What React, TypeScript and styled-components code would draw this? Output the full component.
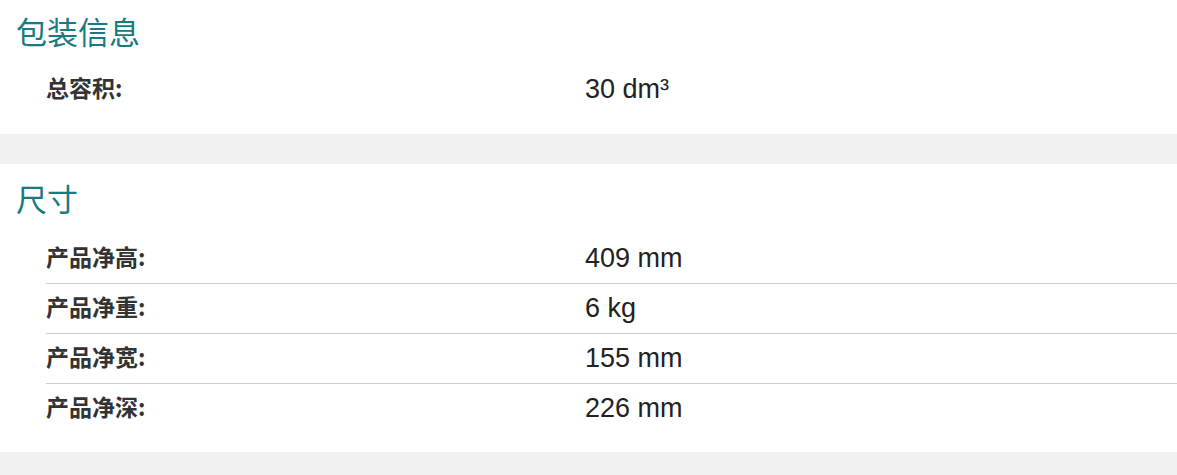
import React from "react";
import styled, { createGlobalStyle } from "styled-components";

const GlobalStyle = createGlobalStyle`
  html, body {
    margin: 0;
    padding: 0;
    background: #f1f1f1;
  }
  body {
    font-family: "Liberation Sans", Arial, "Noto Sans CJK SC", sans-serif;
  }
`;

const Page = styled.div`
  display: flex;
  flex-direction: column;
  gap: 30px;
  padding-bottom: 23px;
`;

const Panel = styled.section<{ $top: number; $bottom: number }>`
  background: #fff;
  padding: ${(p) => p.$top}px 0 ${(p) => p.$bottom}px 16px;
`;

const Heading = styled.h2`
  margin: 0;
  font-family: "Noto Sans CJK SC", sans-serif;
  font-weight: 400;
  font-size: 31px;
  line-height: 40px;
  color: #1a7a82;
`;

const List = styled.div`
  margin-left: 30px;
  display: flex;
  flex-direction: column;
`;

const Row = styled.div`
  display: grid;
  grid-template-columns: 539px 1fr;
  align-items: center;
  height: 49px;
  border-bottom: 1px solid #cfcfcf;

  &:last-child {
    border-bottom: none;
  }
`;

const Label = styled.div`
  font-family: "Noto Sans CJK SC", sans-serif;
  font-weight: 700;
  font-size: 23px;
  line-height: 30px;
  padding-bottom: 6px;
  color: #333;
`;

const Value = styled.div`
  font-family: "Liberation Sans", Arial, sans-serif;
  font-size: 27px;
  line-height: 30px;
  padding-bottom: 2px;
  color: #222;
`;

const Spacer = styled.div<{ $h: number }>`
  height: ${(p) => p.$h}px;
`;

type Item = { label: string; value: string };

const sections: { title: string; top: number; gap: number; bottom: number; items: Item[] }[] = [
  {
    title: "包装信息",
    top: 11,
    gap: 14,
    bottom: 20,
    items: [{ label: "总容积:", value: "30 dm³" }],
  },
  {
    title: "尺寸",
    top: 14,
    gap: 16,
    bottom: 19,
    items: [
      { label: "产品净高:", value: "409 mm" },
      { label: "产品净重:", value: "6 kg" },
      { label: "产品净宽:", value: "155 mm" },
      { label: "产品净深:", value: "226 mm" },
    ],
  },
];

export default function App() {
  return (
    <>
      <GlobalStyle />
      <Page>
        {sections.map((s) => (
          <Panel key={s.title} $top={s.top} $bottom={s.bottom}>
            <Heading>{s.title}</Heading>
            <Spacer $h={s.gap} />
            <List>
              {s.items.map((it) => (
                <Row key={it.label}>
                  <Label>{it.label}</Label>
                  <Value>{it.value}</Value>
                </Row>
              ))}
            </List>
          </Panel>
        ))}
      </Page>
    </>
  );
}
